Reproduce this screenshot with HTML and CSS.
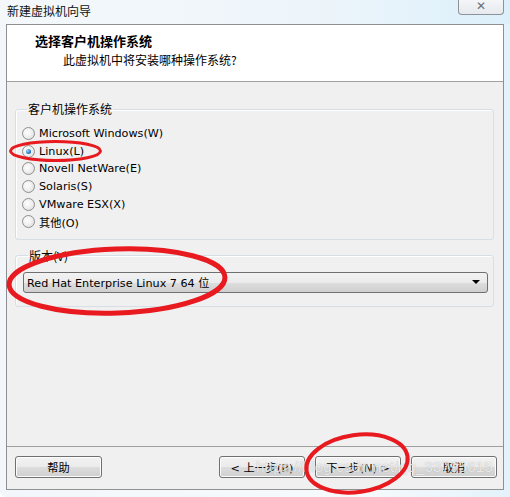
FILE: index.html
```html
<!DOCTYPE html>
<html lang="zh-CN">
<head>
<meta charset="utf-8">
<title>新建虚拟机向导</title>
<link rel="stylesheet" href="styles.css">
</head>
<body>
<div class="window">
  <div class="titlebar">
    <span class="title">新建虚拟机向导</span>
    <span class="close">✕</span>
  </div>
  <div class="client">
    <div class="header">
      <div class="h-title">选择客户机操作系统</div>
      <div class="h-sub">此虚拟机中将安装哪种操作系统?</div>
    </div>
    <div class="content">
      <fieldset class="group g-os">
        <legend>客户机操作系统</legend>
        <div class="radio"><span class="dot"></span>Microsoft Windows(W)</div>
        <div class="radio"><span class="dot on"></span>Linux(L)</div>
        <div class="radio"><span class="dot"></span>Novell NetWare(E)</div>
        <div class="radio"><span class="dot"></span>Solaris(S)</div>
        <div class="radio"><span class="dot"></span>VMware ESX(X)</div>
        <div class="radio"><span class="dot"></span>其他(O)</div>
      </fieldset>
      <fieldset class="group g-ver">
        <legend>版本(V)</legend>
        <div class="select">
          <span>Red Hat Enterprise Linux 7 64 位</span>
          <span class="arrow"></span>
        </div>
      </fieldset>
    </div>
    <div class="footer">
      <button class="btn">帮助</button>
      <span class="spacer"></span>
      <button class="btn">&lt; 上一步(B)</button>
      <button class="btn">下一步(N) &gt;</button>
      <button class="btn">取消</button>
    </div>
  </div>
  <div class="watermark">https://blog.csdn.net/qq_33795615</div>
  <svg class="marks" width="510" height="497" viewBox="0 0 510 497">
    <ellipse cx="55.5" cy="151" rx="45" ry="9.5" fill="none" stroke="#e8191f" stroke-width="3"/>
    <ellipse cx="117" cy="281" rx="108" ry="32" transform="rotate(-2 117 281)" fill="none" stroke="#e8191f" stroke-width="5"/>
    <ellipse cx="357" cy="463.5" rx="51" ry="28.5" transform="rotate(-8 357 463.5)" fill="none" stroke="#e8191f" stroke-width="4"/>
  </svg>
</div>
</body>
</html>
```

FILE: styles.css
```css
* { box-sizing: border-box; }
html, body { margin: 0; padding: 0; }
body {
  width: 510px;
  height: 497px;
  overflow: hidden;
  background: #ffffff;
  font-family: "Liberation Sans", "Noto Sans CJK SC", sans-serif;
  font-size: 12px;
  color: #000;
}
.window {
  position: relative;
  width: 510px;
  height: 497px;
  background: linear-gradient(90deg, #f3f7fb 0%, #f7fafc 70%, #e4f2fb 100%);
  border-bottom-left-radius: 6px;
}
.titlebar {
  height: 24px;
  display: flex;
  align-items: flex-start;
  background: linear-gradient(90deg, #f4f8fb 0%, #eef5fa 60%, #dcf0fb 100%);
}
.title {
  margin: 3px 0 0 7px;
  line-height: 16px;
  font-family: "Noto Sans CJK SC", sans-serif;
  font-size: 12px;
  color: #111;
}
.close {
  margin-left: auto;
  margin-right: 6px;
  width: 46px;
  height: 15px;
  border: 1px solid #8d9399;
  border-top: none;
  border-radius: 0 0 4px 4px;
  background: linear-gradient(#f4f6f8, #e6eaee);
  color: #6a6f75;
  font-size: 12px;
  line-height: 13px;
  text-align: center;
  font-family: "DejaVu Sans", sans-serif;
  font-weight: bold;
}
.client {
  margin-left: 6px;
  width: 498px;
  height: 466px;
  border: 1px solid #8e9091;
  background: #f0f0f0;
  display: flex;
  flex-direction: column;
}
.header {
  height: 57px;
  background: #fff;
  border-bottom: 1px solid #a0a0a0;
  padding: 7px 0 0 28px;
  font-family: "Noto Sans CJK SC", sans-serif;
}
.h-title {
  font-size: 13px;
  font-weight: bold;
  line-height: 18px;
}
.h-sub {
  font-size: 12px;
  line-height: 18px;
  margin-top: 1px;
  padding-left: 28px;
}
.content {
  height: 365px;
  padding: 20px 9px 0 8px;
  border-bottom: 1px solid #a0a0a0;
}
.group {
  margin: 0;
  padding: 0;
  border: 1px solid #d5dfe5;
  border-radius: 3px;
  box-shadow: inset 1px 1px 0 #fff;
}
.group legend {
  margin-left: 5px;
  padding: 0 1px;
  font-family: "Noto Sans CJK SC", sans-serif;
  font-size: 12px;
  line-height: 14px;
  color: #000;
}
.g-os { padding: 9px 0 8px 6px; }
.radio {
  height: 17.6px;
  display: flex;
  align-items: center;
  gap: 4px;
  font-family: "DejaVu Sans", "Noto Sans CJK SC", sans-serif;
  font-size: 11.2px;
}
.dot {
  width: 13px;
  height: 13px;
  border-radius: 50%;
  border: 1px solid #8f8f8f;
  background: radial-gradient(circle at 40% 40%, #ffffff 0%, #f0f0f0 45%, #d8d8d8 100%);
  position: relative;
  flex: none;
}
.dot.on::after {
  content: "";
  position: absolute;
  left: 3px;
  top: 3px;
  width: 5px;
  height: 5px;
  border-radius: 50%;
  background: radial-gradient(circle at 35% 35%, #9fd8ff 0%, #2a80c8 55%, #0d4f8c 100%);
}
.g-ver {
  margin-top: 9px;
  padding: 9px 5px 13px 7px;
}
.select {
  height: 21px;
  border: 1px solid #707070;
  border-radius: 3px;
  background: linear-gradient(#f2f2f2 0%, #ebebeb 50%, #dddddd 51%, #cfcfcf 100%);
  display: flex;
  align-items: center;
  padding: 0 7px 0 3px;
  font-family: "DejaVu Sans", "Noto Sans CJK SC", sans-serif;
  font-size: 11.2px;
}
.arrow {
  margin-left: auto;
  width: 0;
  height: 0;
  border-left: 4px solid transparent;
  border-right: 4px solid transparent;
  border-top: 4px solid #000;
}
.footer {
  flex: 1;
  display: flex;
  align-items: flex-start;
  gap: 10px;
  padding: 9px 6px 0 8px;
}
.spacer { flex: 1; }
.btn {
  width: 86px;
  height: 22px;
  padding: 0;
  border: 1px solid #707070;
  border-radius: 3px;
  background: linear-gradient(#f2f2f2 0%, #ebebeb 50%, #dddddd 51%, #cfcfcf 100%);
  font-family: "DejaVu Sans", "Noto Sans CJK SC", sans-serif;
  font-size: 11.2px;
  color: #000;
  box-shadow: inset 0 0 0 1px #fcfcfc;
}
.btn:first-child { width: 87px; }
.watermark {
  position: absolute;
  left: 256px;
  top: 458px;
  font-family: "Liberation Sans", sans-serif;
  font-size: 15px;
  color: rgba(255, 255, 255, 0.75);
  text-shadow: 0 0 1px rgba(110, 110, 110, 0.55);
  letter-spacing: 0.2px;
  pointer-events: none;
}
.marks {
  position: absolute;
  left: 0;
  top: 0;
  pointer-events: none;
}
```
